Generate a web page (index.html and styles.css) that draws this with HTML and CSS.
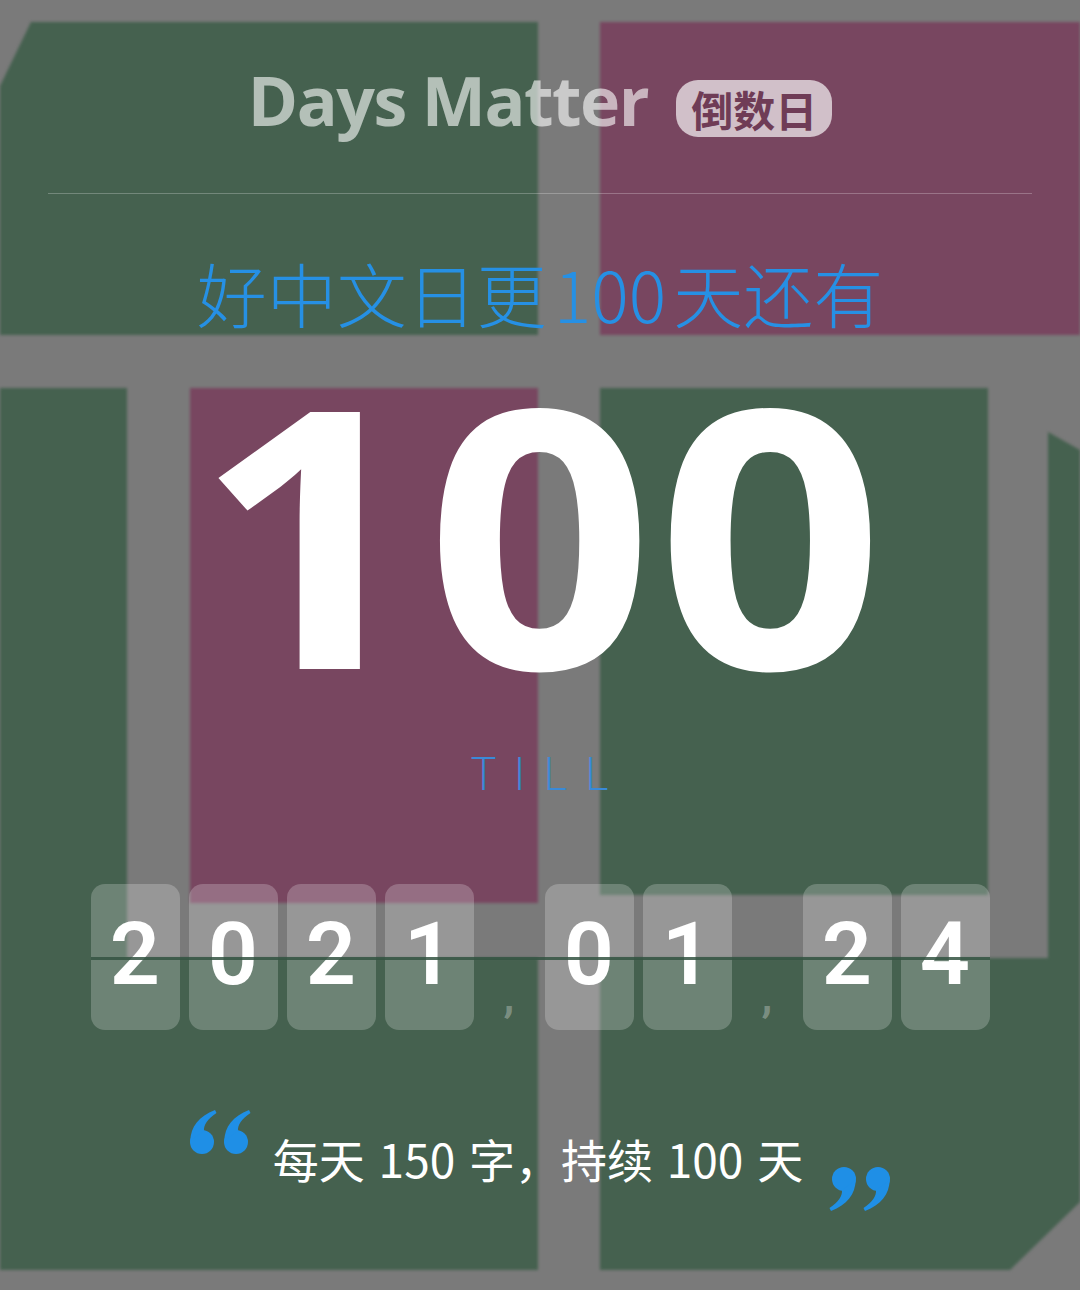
FILE: index.html
```html
<!DOCTYPE html>
<html lang="zh-CN">
<head>
<meta charset="utf-8">
<title>Days Matter 倒数日</title>
<link rel="stylesheet" href="styles.css">
</head>
<body>
<div class="screen">
  <div class="backdrop" aria-hidden="true">
    <div class="blk green tl"></div>
    <div class="blk purple tr"></div>
    <div class="blk green lc"></div>
    <div class="blk purple md"></div>
    <div class="blk green me"></div>
    <div class="blk green rs"></div>
    <div class="blk green bl"></div>
    <div class="blk green br"></div>
  </div>

  <main class="card">
    <header class="brand">
      <span class="brand-name">Days Matter</span>
      <span class="brand-badge">倒数日</span>
    </header>
    <hr class="rule">

    <h1 class="event">好中文日更<span class="num">100</span>天还有</h1>
    <div class="count">100</div>
    <div class="till">TILL</div>

    <div class="date">
      <span class="tile">2</span>
      <span class="tile">0</span>
      <span class="tile">2</span>
      <span class="tile">1</span>
      <span class="sep">,</span>
      <span class="tile">0</span>
      <span class="tile">1</span>
      <span class="sep">,</span>
      <span class="tile">2</span>
      <span class="tile">4</span>
    </div>

    <blockquote class="quote">
      <svg class="qmark open" viewBox="0 0 61 44" aria-hidden="true">
        <circle cx="12" cy="32" r="12"/>
        <path d="M0.3 31 C0.6 17 9 6 25 0 L26.5 3 C17.5 9 13.5 15 14 21 Z"/>
        <circle cx="46" cy="32" r="12"/>
        <path d="M34.3 31 C34.6 17 43 6 59 0 L60.5 3 C51.5 9 47.5 15 48 21 Z"/>
      </svg>
      <p class="quote-text">每天<span class="qn">150</span>字，持续<span class="qn">100</span>天</p>
      <svg class="qmark close" viewBox="0 0 61 44" aria-hidden="true">
        <circle cx="12" cy="32" r="12"/>
        <path d="M0.3 31 C0.6 17 9 6 25 0 L26.5 3 C17.5 9 13.5 15 14 21 Z"/>
        <circle cx="46" cy="32" r="12"/>
        <path d="M34.3 31 C34.6 17 43 6 59 0 L60.5 3 C51.5 9 47.5 15 48 21 Z"/>
      </svg>
    </blockquote>
  </main>
</div>
</body>
</html>
```
FILE: styles.css
```css
* { box-sizing: border-box; }

html, body {
  margin: 0;
  padding: 0;
  background: #7a7a7a;
}

.screen {
  position: relative;
  width: 1080px;
  height: 1290px;
  overflow: hidden;
  background: #7a7a7a;
}

/* blurred photo-like backdrop of coloured panels */
.backdrop {
  position: absolute;
  inset: 0;
  display: grid;
  grid-template-columns: 127px 63px 348px 62px 388px 60px 32px;
  grid-template-rows: 22px 313px 53px 515px 55px 312px 20px;
  filter: blur(1.5px);
}

.blk { min-width: 0; min-height: 0; }
.green { background: #45614f; }
.purple { background: #784660; }

.tl { grid-column: 1 / 4; grid-row: 2; clip-path: polygon(31px 0, 100% 0, 100% 100%, 0 100%, 0 64px); }
.tr { grid-column: 5 / 8; grid-row: 2; }
.lc { grid-column: 1; grid-row: 4 / 7; }
.md { grid-column: 3; grid-row: 4; }
.me { grid-column: 5; grid-row: 4; margin-bottom: 8px; }
.rs { grid-column: 7; grid-row: 4 / 6; margin-top: 44px; clip-path: polygon(0 0, 100% 18px, 100% 100%, 0 100%); }
.bl { grid-column: 1 / 4; grid-row: 6; }
.br { grid-column: 5 / 8; grid-row: 6; clip-path: polygon(0 0, 100% 0, 100% 244px, 410px 100%, 0 100%); }

/* foreground content */
.card {
  position: relative;
  z-index: 1;
  display: flex;
  flex-direction: column;
  align-items: center;
  padding-top: 66px;
  height: 100%;
}

.brand {
  display: flex;
  align-items: flex-start;
  gap: 28px;
}

.brand-name {
  font-family: "Open Sans", "Liberation Sans", sans-serif;
  font-weight: 700;
  font-size: 68px;
  line-height: 1;
  letter-spacing: -1.5px;
  color: rgba(255, 255, 255, 0.6);
}

.brand-badge {
  margin-top: 14px;
  height: 57px;
  padding: 0 15px;
  border-radius: 22px;
  background: rgba(255, 255, 255, 0.66);
  color: #6f3c56;
  font-family: "Noto Sans CJK SC", sans-serif;
  font-weight: 600;
  font-size: 42px;
  line-height: 57px;
}

.rule {
  width: 984px;
  margin: 56px 0 0;
  border: 0;
  height: 1px;
  background: rgba(255, 255, 255, 0.25);
}

.event {
  margin: 64px 0 0;
  font-family: "Noto Sans CJK SC", sans-serif;
  font-weight: 300;
  font-size: 70px;
  line-height: 1;
  color: #2690e4;
  white-space: nowrap;
}

.event .num { margin: 0 0.1em; }

.count {
  margin-top: 57px;
  font-family: "Open Sans", "Liberation Sans", sans-serif;
  font-weight: 740;
  font-size: 360px;
  line-height: 0.8;
  color: #ffffff;
  letter-spacing: 2px;
  padding-left: 2px;
  transform: scaleX(1.11);
}

.till {
  margin-top: 76px;
  padding-left: 18px;
  font-family: "Open Sans", "Liberation Sans", sans-serif;
  font-weight: 300;
  font-size: 46px;
  line-height: 1;
  letter-spacing: 18px;
  color: #3a8ad8;
}

.date {
  position: relative;
  margin-top: 89px;
  display: flex;
  gap: 9px;
}

.date::after {
  content: "";
  position: absolute;
  left: 0;
  right: 0;
  top: 73px;
  height: 3px;
  background: rgba(52, 84, 66, 0.85);
}

.tile {
  width: 89px;
  height: 146px;
  border-radius: 14px;
  background: rgba(255, 255, 255, 0.22);
  color: #ffffff;
  font-family: Roboto, "Liberation Sans", Arial, sans-serif;
  font-weight: 600;
  font-size: 88px;
  line-height: 140px;
  text-align: center;
}

.sep {
  width: 53px;
  height: 146px;
  display: flex;
  align-items: flex-end;
  justify-content: center;
  padding-bottom: 12px;
  font-family: Roboto, "Liberation Sans", Arial, sans-serif;
  font-weight: 700;
  font-size: 44px;
  line-height: 1;
  color: rgba(255, 255, 255, 0.3);
}

.quote {
  margin: 80px 0 0;
  display: flex;
  align-items: flex-start;
}

.qmark {
  width: 61px;
  height: 44px;
  fill: #1f8fe6;
  flex: none;
}

.qmark.close {
  transform: rotate(180deg);
  margin-top: 57px;
  margin-left: 26px;
}

.qmark.open { margin-right: 22px; }

.quote-text {
  margin: 25px 0 0;
  font-family: "Noto Sans CJK SC", sans-serif;
  font-weight: 400;
  font-size: 46px;
  line-height: 1;
  color: #ffffff;
  white-space: nowrap;
}

.quote-text .qn { margin: 0 0.3em; }
```
